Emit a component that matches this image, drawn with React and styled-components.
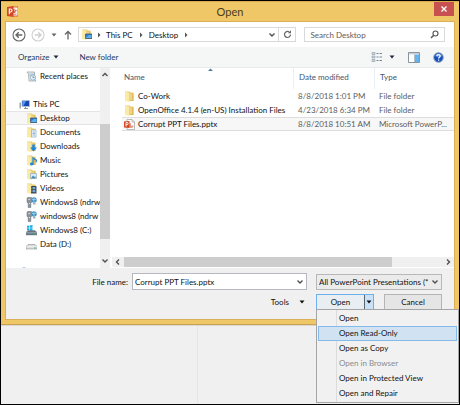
import React from "react";
import styled, { createGlobalStyle, css } from "styled-components";

const GlobalStyle = createGlobalStyle`
  * {
    box-sizing: border-box;
  }

  body {
    margin: 0;
    background: #f0f0f0;
    color: #111;
    font: 8px/14px Lato, "Open Sans", sans-serif;
  }

  button, input, select {
    margin: 0;
    padding: 0;
    border: 0;
    border-radius: 0;
    background: none;
    color: inherit;
    font: inherit;
    outline: none;
  }
`;

// Window frame
const Screen = styled.div`
  display: flex;
  flex-direction: column;
  min-height: 100vh;
  border: 1px solid #000;
`;

const Dialog = styled.section`
  background: #f0c766;
  padding: 0 5px 5px;
  border-top: 1px solid #d8ab52;
  border-bottom: 1px solid #c9a353;
`;

const TitleBar = styled.header`
  display: grid;
  grid-template-columns: 1fr auto 1fr;
  height: 20px;
`;

const TitleIcon = styled.span`
  padding: 4px 1px;
`;

const Title = styled.h1`
  margin: 0;
  font-size: 11px;
  font-weight: 400;
  line-height: 20px;
  color: #4a3d20;
`;

const CloseButton = styled.button`
  justify-self: end;
  display: flex;
  align-items: center;
  justify-content: center;
  width: 20px;
  height: 14px;
  background: #c75050;
`;

const Content = styled.div`
  background: #f0f0f0;
  outline: 1px solid #d9b058;
`;

// Address row
const NavBar = styled.div`
  display: flex;
  align-items: center;
  height: 25px;
  padding: 0 9px 0 6px;
  background: #fff;
`;

const IconButton = styled.button`
  display: flex;
  align-items: center;
  justify-content: center;
  width: ${(p) => p.$width || 14}px;
  height: 14px;
  flex: none;
`;

const NavButtons = styled.div`
  display: flex;
  align-items: center;
  gap: 5px;
  width: 66px;
`;

const AddressBar = styled.div`
  display: flex;
  align-items: center;
  flex: 5;
  height: 15px;
  padding-left: 2px;
  border: 1px solid #d9d9d9;
`;

const Crumb = styled.a`
  color: inherit;
  text-decoration: none;
  white-space: nowrap;
`;

const Spacer = styled.span`
  flex: 1;
`;

const Refresh = styled(IconButton)`
  border-left: 1px solid #d9d9d9;
`;

const SearchBox = styled.label`
  display: flex;
  align-items: center;
  flex: 3;
  height: 15px;
  margin-left: 8px;
  padding: 0 5px;
  border: 1px solid #d9d9d9;

  input {
    flex: 1;
    min-width: 0;
    height: 13px;
  }

  input::placeholder {
    color: #5d5d5d;
    opacity: 1;
  }
`;

// Command row
const Toolbar = styled.div`
  display: flex;
  align-items: center;
  height: 21px;
  padding: 0 6px 0 12px;
  background: #f5f7f7;
  border-bottom: 1px solid #e6eaea;
  color: #1e395b;
`;

const Command = styled.button`
  display: flex;
  align-items: center;
  gap: 4px;
  margin-right: 20px;
`;

const ViewTools = styled.div`
  display: flex;
  align-items: center;
  margin-left: auto;
`;

// Browser panes
const Browser = styled.div`
  display: flex;
  height: 200px;
  overflow: hidden;
  background: #fff;
`;

const Tree = styled.ul`
  flex: none;
  width: 94px;
  margin: 0;
  padding: 1px 0 0;
  list-style: none;
  overflow: hidden;
`;

const TreeItem = styled.li`
  margin-top: ${(p) => (p.$gap ? 14 : 0)}px;
  padding-left: ${(p) => (p.$root ? 13 : 20)}px;
  border: 1px solid transparent;
  border-width: 1px 0;
  height: 14px;

  ${(p) =>
    p.$selected &&
    css`
      background: #f7f7f7;
      border-color: #e4e4e4;
    `}
`;

const TreeButton = styled.button`
  display: flex;
  align-items: center;
  gap: 3px;
  height: 12px;
  white-space: nowrap;
`;

const VScroll = styled.div`
  display: flex;
  flex-direction: column;
  flex: none;
  width: 10px;
  background: #f0f0f0;
`;

const VThumb = styled.div`
  height: 115px;
  margin: 42px 0 auto;
  background: #cdcdcd;
`;

const FilePane = styled.div`
  display: flex;
  flex-direction: column;
  flex: 1;
  min-width: 0;
  margin-left: 2px;
`;

const FileTable = styled.table`
  width: 100%;
  table-layout: fixed;
  border-collapse: separate;
  border-spacing: 0;
  padding-left: 10px;

  th {
    position: relative;
    height: 21px;
    padding: 0 0 3px 5px;
    border-right: 1px solid #e8eff5;
    color: #43566f;
    font-weight: 400;
    text-align: left;
  }

  th:first-child {
    padding-left: 2px;
  }

  th:last-child {
    border-right: 0;
  }

  td {
    height: 14px;
    padding: 0 4px;
    line-height: 12px;
    border: 1px solid transparent;
    border-width: 1px 0;
    color: #5d5d5d;
    white-space: nowrap;
    overflow: hidden;
    text-overflow: ellipsis;
  }

  td:first-child {
    padding: 0 2px;
    color: #111;
  }
`;

const FileRow = styled.tr`
  ${(p) =>
    p.$selected &&
    css`
      td {
        background: #f7f7f7;
        border-color: #dedede;
      }
    `}
`;

const FileName = styled.span`
  display: flex;
  align-items: center;
  gap: 3px;

  svg {
    flex: none;
  }
`;

const SortMark = styled.span`
  position: absolute;
  top: 0;
  left: 50%;
`;

const HScroll = styled.div`
  display: flex;
  align-items: center;
  height: 10px;
  margin: auto 0 1px;
  background: #f0f0f0;
`;

const HThumb = styled.div`
  flex: 1;
  height: 10px;
  margin-right: 50px;
  background: #cdcdcd;
`;

// Bottom form
const Footer = styled.form`
  display: flex;
  flex-direction: column;
  gap: 4px;
  padding: 5px 12px 9px;
`;

const FooterRow = styled.div`
  display: flex;
  align-items: center;
  justify-content: flex-end;
`;

const FieldLabel = styled.label`
  width: 114px;
  padding-right: 4px;
  text-align: right;
  white-space: nowrap;
`;

const ComboBox = styled.div`
  display: flex;
  align-items: center;
  flex: 1;
  height: 17px;
  min-width: 0;
  border: 1px solid #b5b8bc;
  background: #fff;

  input {
    flex: 1;
    min-width: 0;
    padding-left: 2px;
  }
`;

const TypeFilter = styled.div`
  display: grid;
  align-items: center;
  width: 126px;
  height: 16px;
  margin-left: 9px;
  border: 1px solid #b8b8b8;
  background: #ebebeb;

  select,
  svg {
    grid-area: 1 / 1;
  }

  select {
    appearance: none;
    width: 100%;
    padding: 0 11px 0 2px;
  }

  svg {
    justify-self: end;
    margin-right: 2px;
    pointer-events: none;
  }
`;

const ToolsButton = styled.button`
  display: flex;
  align-items: center;
  gap: 10px;
  margin-right: 11px;
`;

const SplitButton = styled.div`
  position: relative;
  display: flex;
  width: 58px;
  height: 16px;
  margin-right: 10px;
  border: 1px solid #6cb0ee;
  background: #e9eef3;
`;

const OpenButton = styled.button`
  flex: 1;
  line-height: 14px;
`;

const SplitArrow = styled(IconButton)`
  border-left: 1px solid #5c6670;
  background: #c9e2f8;
`;

const CancelButton = styled.button`
  width: 58px;
  height: 16px;
  line-height: 14px;
  border: 1px solid #b5b5b5;
  background: #e5e5e5;
`;

const Menu = styled.ul`
  position: absolute;
  top: 100%;
  left: -1px;
  z-index: 1;
  width: 143px;
  margin: 0;
  padding: 1px;
  list-style: none;
  background: linear-gradient(to right, transparent 19px, #dcdcdc 19px, #dcdcdc 20px, transparent 20px) #f1f1f1;
  border: 1px solid #a5a5a5;
`;

const MenuItem = styled.button`
  display: block;
  width: 100%;
  height: 15px;
  padding-left: 20px;
  border: 1px solid transparent;
  line-height: 13px;
  text-align: left;

  &:disabled {
    color: #8b8b8b;
  }

  ${(p) =>
    p.$active &&
    css`
      background: #d1e3f2;
      border-color: #84bbeb;
    `}
`;

// Area behind the dialog
const Backdrop = styled.div`
  flex: 1;
  display: flex;
  min-height: 79px;
  border-top: 1px solid #dcd8d0;
`;

const BackdropPane = styled.div`
  flex: ${(p) => p.$grow};
  border-right: 1px solid #e6e6e6;

  &:last-child {
    border-right: 0;
  }
`;

const Triangle = ({ color = "#1f2a44", right }) => (
  <svg width="6" height="6" viewBox="0 0 6 6" aria-hidden="true">
    <path d={right ? "M2 .5 4.5 3 2 5.5z" : "M.5 1.5h5L3 4.5z"} fill={color} />
  </svg>
);

const chevrons = {
  down: "M1.5 2.5 4 5l2.5-2.5",
  up: "M1.5 5 4 2.5 6.5 5",
  left: "M5 1.5 2.5 4 5 6.5",
  right: "M3 1.5 5.5 4 3 6.5",
};

const Chevron = ({ dir = "down" }) => (
  <svg width="8" height="8" viewBox="0 0 8 8" aria-hidden="true">
    <path d={chevrons[dir]} fill="none" stroke="#505050" strokeWidth="1.4" />
  </svg>
);

const RoundArrow = ({ flip, color }) => (
  <svg width="14" height="14" viewBox="0 0 14 14" aria-hidden="true">
    <g fill="none" stroke={color} transform={flip ? "matrix(-1 0 0 1 14 0)" : undefined}>
      <circle cx="7" cy="7" r="6" strokeWidth="1.1" />
      <path d="M10.3 7H4.2M6.8 4.2 4 7l2.8 2.8" strokeWidth="1.4" />
    </g>
  </svg>
);

const PowerPointIcon = () => (
  <svg width="11" height="11" viewBox="0 0 11 11" aria-hidden="true">
    <path d="M5 1h6v9H5z" fill="#fff" stroke="#d04526" strokeWidth=".8" />
    <path d="M7 3a2 2 0 1 0 2 2.3H7z" fill="#d04526" />
    <path d="M7.8 2.6v2h2M6.5 8.2h3" fill="none" stroke="#d04526" strokeWidth=".8" />
    <path d="M0 1 6.5 0v11L0 10z" fill="#d24726" />
    <path d="M2.3 8.3V3h1.2a1.4 1.4 0 0 1 0 3H2.3" fill="none" stroke="#fff" strokeWidth="1.1" />
  </svg>
);

const PptFileIcon = () => (
  <svg width="11" height="11" viewBox="0 0 11 11" aria-hidden="true">
    <path d="M3 .5h5l2.5 2.5v7.5H3z" fill="#fff" stroke="#a8a8a8" strokeWidth=".8" />
    <path d="M8 .5V3h2.5" fill="none" stroke="#a8a8a8" strokeWidth=".7" />
    <path d="M7 4v2.5h2.5A2.5 2.5 0 1 1 7 4" fill="#e39a82" />
    <path d="M0 2.5 5.5 2v7L0 8.5z" fill="#d24726" />
    <path d="M2 7.5v-4h1a1.1 1.1 0 0 1 0 2.2H2" fill="none" stroke="#fff" strokeWidth=".9" />
  </svg>
);

const badges = {
  desktop: (
    <>
      <path d="M4.5 5H11v4.5H4.5z" fill="#2d7fd0" stroke="#33506e" strokeWidth=".7" />
      <path d="M5 8.5 8 6l2.5 0v3H5z" fill="#5fb0ee" />
    </>
  ),
  documents: (
    <>
      <path d="M5.5 3h4.5v7H5.5z" fill="#f4f9fd" stroke="#8aa9c4" strokeWidth=".7" />
      <path d="M6.5 5h2.5M6.5 6.5h2.5M6.5 8h2.5" stroke="#6798c4" strokeWidth=".7" />
    </>
  ),
  downloads: <path d="M6.2 3.5h2.5v3H11L7.5 10.5 4 6.5h2.2z" fill="#2185d5" />,
  music: (
    <>
      <path d="M7 8.8V3l3.3 2.2v2" fill="none" stroke="#2785d6" strokeWidth="1.3" />
      <ellipse cx="5.8" cy="9" rx="1.9" ry="1.4" fill="#2785d6" />
    </>
  ),
  pictures: (
    <>
      <path d="M4.5 4.5h6v5h-6z" fill="#d8effb" stroke="#91a9b8" strokeWidth=".7" />
      <path d="M5 9.2 7 6.5l1.5 1.5L9.5 7v2.2z" fill="#438ab5" />
    </>
  ),
  videos: (
    <>
      <path d="M5 3h5.5v7.5H5z" fill="#364250" />
      <path d="M6.5 4h2.5v2.2H6.5zM6.5 7h2.5v2.2H6.5z" fill="#76abd0" />
      <path d="M5.6 3.5v7M9.9 3.5v7" stroke="#dfe6eb" strokeWidth=".5" strokeDasharray=".8" />
    </>
  ),
};

const FolderIcon = ({ badge }) => (
  <svg width="11" height="11" viewBox="0 0 11 11" aria-hidden="true">
    <path d="M1 .5h5l.5 1H9.5V10H1z" fill="#ecd07a" />
    <path d="M5 2.5h4.5V10H5z" fill="#dfbd5b" />
    <path d="M1 .5l4.5 1.5v9L1 10z" fill="#fbeaa6" />
    <path d="M7 3v6" stroke="#f8e8ae" strokeWidth="1.1" />
    {badges[badge]}
  </svg>
);

const RecentIcon = () => (
  <svg width="11" height="11" viewBox="0 0 11 11" aria-hidden="true">
    <path d="M1 1h7.5v7L10 10H3L2.5 3z" fill="#e9eef1" stroke="#99a4ab" strokeWidth=".8" />
    <path d="M3.5 3H8M3.5 4.5H8" stroke="#9aaab5" strokeWidth=".7" />
    <circle cx="7" cy="6.5" r="2.7" fill="#eaf6fd" stroke="#82a6bc" strokeWidth=".8" />
    <path d="M7 4.8v1.9h1.5" fill="none" stroke="#42728f" strokeWidth=".7" />
  </svg>
);

const ComputerIcon = () => (
  <svg width="11" height="11" viewBox="0 0 11 11" aria-hidden="true">
    <path d="M.5 3.5H2v6H.5z" fill="#9aa4ad" />
    <path d="M3 1.5h7.5v6H3z" fill="#1746b5" stroke="#b6c1cc" strokeWidth=".8" />
    <path d="M3.5 2h3.5L4.5 7h-1z" fill="#4f9aef" />
    <path d="M5 9.5h4M6.5 8v1.5" stroke="#8a949e" />
  </svg>
);

const NetworkDriveIcon = () => (
  <svg width="11" height="11" viewBox="0 0 11 11" aria-hidden="true">
    <path d="M1 1.5q0-1 1-1h3.500v5H4.800V10.500H2.200V5.500H1z" fill="#8d959b" stroke="#616a70" strokeWidth=".5" />
    <path d="M2.300 2.500h1.500M3 6.500h1" stroke="#dce2e6" />
    <circle cx="8" cy="3" r="2.700" fill="#3e8fbe" />
    <path d="M6 2.300q1.500 1 4 0M8.300.5Q7 3 8.300 5.500" fill="none" stroke="#b8e1f5" strokeWidth=".7" />
    <path d="M7 6h2.500v1.500H7z" fill="#a4adb4" />
  </svg>
);

const DriveIcon = ({ system }) => (
  <svg width="11" height="11" viewBox="0 0 11 11" aria-hidden="true">
    {system && <path d="M1 .8 3.200.5v2.300H1zM3.700.4 6.500 0v2.800H3.700zM1 3.300h2.200v2.300L1 5.300zM3.700 3.300h2.800V6l-2.800-.3z" fill="#19aee4" />}
    <path d="M2 5.500h7l2 2v2.500H0V7.500z" fill={system ? "#637580" : "#d8dadb"} stroke="#7b8388" strokeWidth=".5" />
    <path d="M.5 7.800h10" stroke={system ? "#a6bbc5" : "#f7f7f7"} strokeWidth=".8" />
    <path d="M8 9h1.700" stroke="#39b56a" strokeWidth=".9" />
  </svg>
);

const NetworkIcon = () => (
  <svg width="11" height="11" viewBox="0 0 11 11" aria-hidden="true">
    <circle cx="5" cy="4" r="3.5" fill="#4388c8" />
    <path d="M1 6h6v4H1z" fill="#1746b5" stroke="#b6c1cc" />
  </svg>
);

const places = [
  { name: "Recent places", icon: <RecentIcon /> },
  { name: "This PC", icon: <ComputerIcon />, root: true, gap: true },
  { name: "Desktop", icon: <FolderIcon badge="desktop" />, selected: true },
  { name: "Documents", icon: <FolderIcon badge="documents" /> },
  { name: "Downloads", icon: <FolderIcon badge="downloads" /> },
  { name: "Music", icon: <FolderIcon badge="music" /> },
  { name: "Pictures", icon: <FolderIcon badge="pictures" /> },
  { name: "Videos", icon: <FolderIcon badge="videos" /> },
  { name: "Windows8 (ndrw", icon: <NetworkDriveIcon /> },
  { name: "windows8 (ndrw", icon: <NetworkDriveIcon /> },
  { name: "Windows8 (C:)", icon: <DriveIcon system /> },
  { name: "Data (D:)", icon: <DriveIcon /> },
  { name: "", icon: <NetworkIcon />, root: true, gap: true },
];

const files = [
  { name: "Co-Work", date: "8/8/2018 1:01 PM", type: "File folder" },
  { name: "OpenOffice 4.1.4 (en-US) Installation Files", date: "4/23/2018 6:34 PM", type: "File folder" },
  { name: "Corrupt PPT Files.pptx", date: "8/8/2018 10:51 AM", type: "Microsoft PowerP...", selected: true },
];

const openModes = [
  { label: "Open" },
  { label: "Open Read-Only", active: true },
  { label: "Open as Copy" },
  { label: "Open in Browser", disabled: true },
  { label: "Open in Protected View" },
  { label: "Open and Repair" },
];

const AddressRow = () => (
  <NavBar>
    <NavButtons>
      <IconButton aria-label="Back"><RoundArrow color="#666" /></IconButton>
      <IconButton aria-label="Forward"><RoundArrow flip color="#d0d0d0" /></IconButton>
      <IconButton $width={8} aria-label="History"><Triangle color="#666" /></IconButton>
      <IconButton $width={10} aria-label="Up">
        <svg width="8" height="10" viewBox="0 0 8 10" aria-hidden="true">
          <path d="M4 9.5V1.5M1 4.5l3-3 3 3" fill="none" stroke="#666" strokeWidth="1.3" />
        </svg>
      </IconButton>
    </NavButtons>
    <AddressBar>
      <FolderIcon badge="desktop" />
      <IconButton aria-label="Root"><Triangle right color="#555" /></IconButton>
      <Crumb href="#this-pc">This PC</Crumb>
      <IconButton $width={16} aria-label="This PC folders"><Triangle right color="#555" /></IconButton>
      <Crumb href="#desktop">Desktop</Crumb>
      <IconButton $width={16} aria-label="Desktop folders"><Triangle right color="#555" /></IconButton>
      <Spacer />
      <IconButton $width={12} aria-label="Previous locations"><Chevron /></IconButton>
      <Refresh $width={17} aria-label="Refresh">
        <svg width="9" height="9" viewBox="0 0 9 9" aria-hidden="true">
          <path d="M7.5 4.5a3 3 0 1 1-1.3-2.5" fill="none" stroke="#666" strokeWidth="1.2" />
          <path d="M5 3.2h3V.2z" fill="#666" />
        </svg>
      </Refresh>
    </AddressBar>
    <SearchBox>
      <input type="search" aria-label="Search Desktop" placeholder="Search Desktop" />
      <svg width="9" height="9" viewBox="0 0 9 9" aria-hidden="true">
        <circle cx="5.5" cy="3.5" r="2.5" fill="none" stroke="#555" strokeWidth="1.1" />
        <path d="M3.7 5.3 1 8" stroke="#555" strokeWidth="1.5" />
      </svg>
    </SearchBox>
  </NavBar>
);

const CommandRow = () => (
  <Toolbar>
    <Command>Organize <Triangle /></Command>
    <Command>New folder</Command>
    <ViewTools>
      <IconButton aria-label="Change view">
        <svg width="12" height="10" viewBox="0 0 12 10" aria-hidden="true">
          <path d="M1 .5h3v2H1zM1 4h3v2H1zM1 7.5h3v2H1z" fill="#cfd9e2" stroke="#8b98a5" strokeWidth=".6" />
          <path d="M5.5 1.5h2M8.5 1.5h2.5M5.5 5h2M8.5 5h2.5M5.5 8.5h2M8.5 8.5h2.5" stroke="#7b8794" />
        </svg>
      </IconButton>
      <IconButton $width={16} aria-label="View options"><Triangle /></IconButton>
      <IconButton $width={28} aria-label="Preview pane">
        <svg width="12" height="11" viewBox="0 0 12 11" aria-hidden="true">
          <path d="M.5.5h11v10H.5z" fill="#fff" stroke="#8794a0" />
          <path d="M1 1h10v1.5H1z" fill="#cbd3da" />
          <path d="M7 2.5h4V10H7z" fill="#66b4ee" />
          <path d="M6.5 2.5V10" stroke="#8ba0b2" strokeWidth=".7" />
        </svg>
      </IconButton>
      <IconButton $width={20} aria-label="Help">
        <svg width="11" height="11" viewBox="0 0 11 11" aria-hidden="true">
          <circle cx="5.5" cy="5.5" r="4.8" fill="#164fc0" stroke="#8fa3bd" />
          <path d="M2 4a3.8 3.8 0 0 1 7 0q-3 1.5-7 0" fill="#5b92e5" />
          <path d="M3.9 4.2c0-2.2 3.3-2.1 3.3-.2 0 1.3-1.6 1.2-1.6 2.6M5.6 7.5v1.2" fill="none" stroke="#fff" strokeWidth="1.2" />
        </svg>
      </IconButton>
    </ViewTools>
  </Toolbar>
);

const FileList = () => (
  <FilePane>
    <FileTable>
      <colgroup>
        <col />
        <col style={{ width: 81 }} />
        <col style={{ width: 79 }} />
      </colgroup>
      <thead>
        <tr>
          <th>
            Name
            <SortMark>
              <svg width="5" height="3" viewBox="0 0 5 3" display="block" aria-hidden="true">
                <path d="M0 3 2.5.5 5 3z" fill="#4f7fa0" />
              </svg>
            </SortMark>
          </th>
          <th>Date modified</th>
          <th>Type</th>
        </tr>
      </thead>
      <tbody>
        {files.map((file) => (
          <FileRow key={file.name} $selected={file.selected}>
            <td>
              <FileName>
                {file.selected ? <PptFileIcon /> : <FolderIcon />}
                {file.name}
              </FileName>
            </td>
            <td>{file.date}</td>
            <td>{file.type}</td>
          </FileRow>
        ))}
      </tbody>
    </FileTable>
    <HScroll>
      <IconButton $width={12} aria-label="Scroll left"><Chevron dir="left" /></IconButton>
      <HThumb />
      <IconButton $width={12} aria-label="Scroll right"><Chevron dir="right" /></IconButton>
    </HScroll>
  </FilePane>
);

const App = () => {
  return (
    <Screen>
      <GlobalStyle />
      <Dialog>
        <TitleBar>
          <TitleIcon><PowerPointIcon /></TitleIcon>
          <Title>Open</Title>
          <CloseButton aria-label="Close">
            <svg width="6" height="6" viewBox="0 0 6 6" aria-hidden="true">
              <path d="M.5.5l5 5M5.5.5l-5 5" stroke="#fff" strokeWidth="1.4" />
            </svg>
          </CloseButton>
        </TitleBar>
        <Content>
          <AddressRow />
          <CommandRow />
          <Browser>
            <Tree>
              {places.map((place) => (
                <TreeItem key={place.name} $root={place.root} $gap={place.gap} $selected={place.selected}>
                  <TreeButton aria-label={place.name || "Network"}>
                    {place.icon}
                    {place.name}
                  </TreeButton>
                </TreeItem>
              ))}
            </Tree>
            <VScroll>
              <IconButton $width={10} aria-label="Scroll up"><Chevron dir="up" /></IconButton>
              <VThumb />
              <IconButton $width={10} aria-label="Scroll down"><Chevron /></IconButton>
            </VScroll>
            <FileList />
          </Browser>
          <Footer onSubmit={(e) => e.preventDefault()}>
            <FooterRow>
              <FieldLabel htmlFor="file-name">File name:</FieldLabel>
              <ComboBox>
                <input id="file-name" defaultValue="Corrupt PPT Files.pptx" />
                <IconButton type="button" $width={12} aria-label="Recent file names"><Chevron /></IconButton>
              </ComboBox>
              <TypeFilter>
                <select aria-label="File type">
                  <option>All PowerPoint Presentations (*</option>
                </select>
                <Chevron />
              </TypeFilter>
            </FooterRow>
            <FooterRow>
              <ToolsButton type="button">Tools <Triangle color="#111" /></ToolsButton>
              <SplitButton>
                <OpenButton>Open</OpenButton>
                <SplitArrow type="button" $width={9} aria-label="Open options"><Triangle color="#111" /></SplitArrow>
                <Menu>
                  {openModes.map((mode) => (
                    <li key={mode.label}>
                      <MenuItem type="button" $active={mode.active} disabled={mode.disabled}>
                        {mode.label}
                      </MenuItem>
                    </li>
                  ))}
                </Menu>
              </SplitButton>
              <CancelButton type="button">Cancel</CancelButton>
            </FooterRow>
          </Footer>
        </Content>
      </Dialog>
      <Backdrop>
        <BackdropPane $grow={3} />
        <BackdropPane $grow={4} />
      </Backdrop>
    </Screen>
  );
};

export default App;
